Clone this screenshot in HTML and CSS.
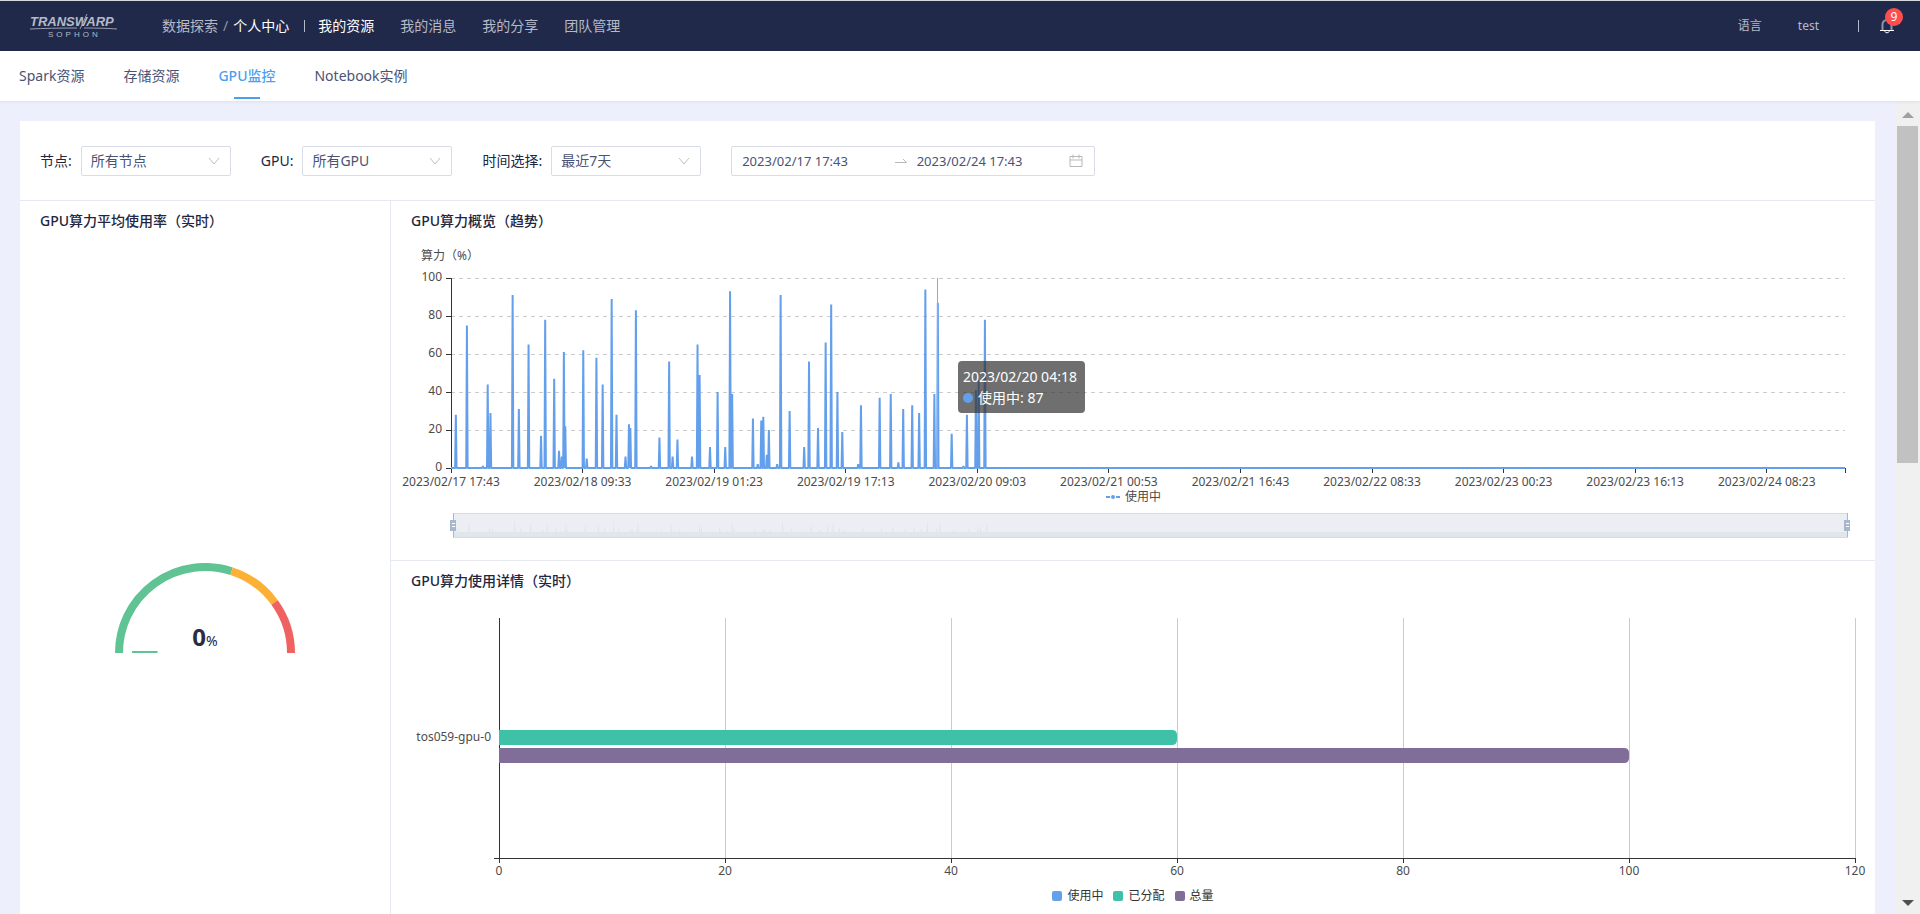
FILE: index.html
```
<!DOCTYPE html>
<html lang="zh-CN">
<head>
<meta charset="UTF-8">
<meta name="viewport" content="width=device-width, initial-scale=1.0">
<title>GPU监控</title>
<link rel="stylesheet" href="styles.css">
</head>
<body>
  <header class="topbar">
    <a class="logo" href="#">
      <svg width="88" height="28" viewBox="0 0 88 28" role="img" aria-label="Transwarp Sophon">
        <text class="logo-name" x="0" y="14">TRANSWARP</text>
        <path d="M0 17q20-1 47-1M54 16q20 0 33 1M57 2l-7 15" />
        <text class="logo-sub" x="18" y="25">SOPHON</text>
      </svg>
    </a>
    <nav class="crumbs">
      <a href="#">数据探索</a>
      <span class="slash">/</span>
      <a class="on" href="#">个人中心</a>
    </nav>
    <span class="bar"></span>
    <nav class="menu">
      <a class="on" href="#">我的资源</a>
      <a href="#">我的消息</a>
      <a href="#">我的分享</a>
      <a href="#">团队管理</a>
    </nav>
    <div class="user">
      <button type="button">语言</button>
      <button type="button">test</button>
      <span class="bar"></span>
      <button type="button" class="bell" aria-label="消息">
        <svg width="14" height="16" viewBox="0 0 14 16">
          <path d="M2.5 12V6.5a4.5 4.5 0 0 1 9 0V12" />
          <path class="base" d="M0 12.5h14" />
          <path class="base" d="M4.5 13.5q2.5 3 5 0" />
        </svg>
        <span class="badge">9</span>
      </button>
    </div>
  </header>

  <nav class="tabs">
    <a href="#">Spark资源</a>
    <a href="#">存储资源</a>
    <a class="active" href="#">GPU监控</a>
    <a href="#">Notebook实例</a>
  </nav>

  <div class="page">
    <main class="content">
      <div class="panel">
        <form class="filters">
          <div class="field">
            <label for="node">节点:</label>
            <div class="select">
              <select id="node"><option>所有节点</option></select>
              <svg width="12" height="8" viewBox="0 0 12 8"><path d="M1 1l5 6 5-6" /></svg>
            </div>
          </div>
          <div class="field">
            <label for="gpu">GPU:</label>
            <div class="select">
              <select id="gpu"><option>所有GPU</option></select>
              <svg width="12" height="8" viewBox="0 0 12 8"><path d="M1 1l5 6 5-6" /></svg>
            </div>
          </div>
          <div class="field">
            <label for="time">时间选择:</label>
            <div class="select">
              <select id="time"><option>最近7天</option></select>
              <svg width="12" height="8" viewBox="0 0 12 8"><path d="M1 1l5 6 5-6" /></svg>
            </div>
          </div>
          <div class="range">
            <input type="text" value="2023/02/17 17:43" aria-label="开始时间">
            <svg width="12" height="12" viewBox="0 0 12 12"><path d="M0 7.5h11.5L8 4" /></svg>
            <input type="text" value="2023/02/24 17:43" aria-label="结束时间">
            <svg width="14" height="14" viewBox="0 0 14 14"><path d="M1 2.5h12v10H1zM1 6h12M4 0.5v4M10 0.5v4" /></svg>
          </div>
        </form>

        <div class="boards">
          <section class="board gauge-board">
            <h2>GPU算力平均使用率（实时）</h2>
            <div class="gauge">
              <svg width="180" height="90" viewBox="0 0 180 90">
                <path stroke="#5fc394" d="M4 90A86 86 0 0 1 116.6 8.2" />
                <path stroke="#fcb036" d="M116.6 8.2A86 86 0 0 1 159.6 39.5" />
                <path stroke="#f06262" d="M159.6 39.5A86 86 0 0 1 176 90" />
                <path class="needle" d="M17 88h26l-1 2H17z" />
              </svg>
              <div class="gauge-value"><b>0</b>%</div>
            </div>
          </section>

          <div class="side">
            <section class="board trend-board">
              <h2>GPU算力概览（趋势）</h2>
              <svg class="chart" id="trend" height="314"></svg>
              <div class="tooltip" id="tooltip">
                <div>2023/02/20 04:18</div>
                <div><i></i>使用中: 87</div>
              </div>
            </section>
            <section class="board detail-board">
              <h2>GPU算力使用详情（实时）</h2>
              <svg class="chart" id="detail" height="295"></svg>
              <ul class="legend">
                <li><i class="used"></i>使用中</li>
                <li><i class="assigned"></i>已分配</li>
                <li><i class="total"></i>总量</li>
              </ul>
            </section>
          </div>
        </div>
      </div>
    </main>
    <div class="scrollbar">
      <button type="button" class="up" aria-label="向上"></button>
      <div class="track"><div class="thumb"></div></div>
      <button type="button" class="down" aria-label="向下"></button>
    </div>
  </div>

  <script src="chart.js"></script>
</body>
</html>
```
FILE: styles.css
```
* {
  box-sizing: border-box;
}

body {
  display: flex;
  flex-direction: column;
  height: 100vh;
  margin: 0;
  overflow: hidden;
  background: #edf0fc;
  color: #22263f;
  font-family: "Noto Sans", "Noto Sans CJK SC", sans-serif;
  font-size: 14px;
  line-height: 20px;
}

a {
  color: inherit;
  text-decoration: none;
}

button {
  padding: 0;
  border: 0;
  background: none;
  color: inherit;
  font: inherit;
  cursor: pointer;
}

svg {
  display: block;
  fill: none;
}

/* top bar */
.topbar {
  display: flex;
  flex: none;
  align-items: center;
  height: 51px;
  padding: 0 26px 0 30px;
  border-top: 1px solid #d5dbdc;
  background: #21294b;
  color: #b5bac8;
}

.logo {
  margin-right: 44px;
}

.logo path {
  stroke: #9a9fb3;
}

.logo-name {
  fill: #b5bac8;
  font-family: "Liberation Sans", Arial, sans-serif;
  font-size: 13px;
  font-style: italic;
  font-weight: bold;
}

.logo-sub {
  fill: #b5bac8;
  font-family: "Liberation Sans", Arial, sans-serif;
  font-size: 8px;
  letter-spacing: 3px;
}

.crumbs {
  display: flex;
  gap: 5px;
}

.slash {
  color: #8f94a8;
}

.on {
  color: #fff;
}

.bar {
  width: 1px;
  height: 12px;
  margin: 0 13px 0 15px;
  background: #b5bac8;
}

.menu {
  display: flex;
  gap: 26px;
}

.user {
  display: flex;
  align-items: center;
  gap: 36px;
  margin-left: auto;
  font-size: 12px;
}

.user .bar {
  margin: 0 -15px 0 3px;
}

.bell {
  position: relative;
}

.bell path {
  stroke: #8f94a8;
  stroke-width: 2;
}

.bell .base {
  stroke: #fff;
  stroke-width: 1;
}

.badge {
  position: absolute;
  top: -10px;
  left: 5px;
  width: 18px;
  height: 18px;
  border-radius: 9px;
  background: #ff4d4f;
  color: #fff;
  line-height: 18px;
  text-align: center;
}

/* tabs */
.tabs {
  position: relative;
  display: flex;
  flex: none;
  gap: 39px;
  height: 50px;
  padding: 0 19px;
  background: #fff;
  box-shadow: 0 1px 3px rgba(0, 21, 41, 0.08);
  color: #4a5375;
}

.tabs a {
  height: 50px;
  line-height: 50px;
}

.tabs .active {
  position: relative;
  color: #4a9ff0;
  font-weight: 500;
}

.tabs .active::after {
  content: "";
  position: absolute;
  bottom: 2px;
  left: 50%;
  width: 26px;
  height: 2px;
  margin-left: -13px;
  background: #4a9ff0;
}

/* page */
.page {
  display: flex;
  flex: 1;
  min-height: 0;
}

.content {
  flex: 1;
  min-width: 0;
  padding: 20px 20px 0;
  overflow: hidden;
}

.panel {
  display: flex;
  flex-direction: column;
  background: #fff;
}

.filters {
  display: flex;
  align-items: center;
  gap: 30px;
  padding: 25px 20px 24px;
  border-bottom: 1px solid #e6e8f2;
}

.field {
  display: flex;
  align-items: center;
  gap: 9px;
}

.select {
  position: relative;
}

select {
  display: block;
  width: 150px;
  height: 30px;
  padding: 0 9px;
  border: 1px solid #d9dce6;
  border-radius: 2px;
  appearance: none;
  background: #fff;
  color: #4a5375;
  font: inherit;
}

.select svg {
  position: absolute;
  top: 11px;
  right: 11px;
  pointer-events: none;
  stroke: #bfbfbf;
}

.range {
  display: flex;
  align-items: center;
  gap: 10px;
  width: 364px;
  height: 30px;
  padding: 0 11px 0 10px;
  border: 1px solid #d9dce6;
  border-radius: 2px;
}

.range input {
  flex: 1;
  min-width: 0;
  padding: 0;
  border: 0;
  outline: none;
  color: #4a5375;
  font: inherit;
  font-size: 13px;
}

.range svg {
  stroke: #b8b8b8;
}

/* boards */
.boards {
  display: flex;
}

.board {
  padding: 10px 20px;
}

h2 {
  margin: 0;
  font-size: 14px;
  font-weight: 500;
  line-height: 20px;
}

.gauge-board {
  width: 370px;
  flex: none;
}

.gauge {
  position: relative;
  width: 180px;
  margin: 332px auto 0;
}

.gauge path {
  stroke-width: 8;
}

.gauge .needle {
  fill: #5fc394;
  stroke: none;
}

.gauge-value {
  position: absolute;
  right: 0;
  bottom: 0;
  left: 0;
  line-height: 24px;
  text-align: center;
}

.gauge-value b {
  color: #2b2e3c;
  font-size: 24px;
}

.side {
  flex: 1;
  min-width: 0;
  border-left: 1px solid #e6e8f2;
}

.trend-board {
  position: relative;
  height: 360px;
  border-bottom: 1px solid #e6e8f2;
}

.detail-board {
  padding-bottom: 30px;
}

.chart {
  width: calc(100% + 40px);
  margin: 0 -20px;
}

.chart text {
  fill: #4c4c4c;
  font-size: 12px;
}

.chart rect,
.chart line {
  shape-rendering: crispEdges;
}

.tooltip {
  position: absolute;
  top: 160px;
  padding: 5px 8px 5px 5px;
  border-radius: 4px;
  background: rgba(50, 50, 50, 0.7);
  color: #fff;
  line-height: 21px;
  white-space: nowrap;
}

.tooltip i {
  display: inline-block;
  width: 10px;
  height: 10px;
  margin-right: 5px;
  border-radius: 50%;
  background: #649fec;
}

.legend {
  display: flex;
  justify-content: center;
  gap: 10px;
  margin: 0;
  padding: 0;
  list-style: none;
  color: #333;
  font-size: 12px;
  line-height: 20px;
}

.legend li {
  display: flex;
  align-items: center;
  gap: 5px;
}

.legend i {
  width: 10px;
  height: 10px;
  border-radius: 2px;
}

.used {
  background: #649fec;
}

.assigned {
  background: #3fc1a8;
}

.total {
  background: #816e98;
}

/* scrollbar */
.scrollbar {
  display: flex;
  flex-direction: column;
  width: 25px;
  padding: 3px 0 0;
  background: #f0f0f0;
}

.up,
.down {
  display: flex;
  align-items: center;
  justify-content: center;
  height: 22px;
}

.up::before,
.down::before {
  content: "";
  border: 6px solid transparent;
}

.up::before {
  border-top: 0;
  border-bottom-color: #a0a0a0;
}

.down::before {
  border-bottom: 0;
  border-top-color: #505050;
}

.track {
  flex: 1;
  padding: 0 2px;
}

.thumb {
  height: 44%;
  background: #c1c1c1;
}
```
FILE: chart.js
```
const NS = 'http://www.w3.org/2000/svg';

// one sample every 5 minutes, 7 days
const SAMPLES = 2013;
const STEP = 190;
const HOVER = 703;

// [sample, usage], every other sample is 0
const peaks = [
  [7, 28], [23, 75], [46, 1], [53, 44], [57, 29], [89, 91], [98, 31], [112, 65],
  [130, 17], [136, 78], [149, 47], [156, 9], [160, 6], [163, 61], [165, 22], [191, 62],
  [196, 5], [210, 58], [219, 44], [232, 89], [239, 28], [252, 6], [257, 23], [259, 21],
  [267, 83], [289, 1], [301, 16], [315, 56], [320, 6], [327, 15], [348, 6], [356, 65],
  [359, 49], [374, 11], [385, 40], [396, 11], [403, 93], [406, 39], [436, 26], [443, 2],
  [448, 25], [451, 27], [456, 7], [459, 20], [471, 2], [476, 91], [489, 30], [510, 11],
  [517, 56], [530, 21], [541, 66], [549, 86], [558, 40], [565, 19], [588, 2], [592, 33],
  [619, 37], [635, 39], [646, 3], [653, 31], [666, 33], [676, 29], [685, 94], [698, 39],
  [703, 87], [723, 18], [740, 1], [745, 28], [758, 41], [762, 46], [771, 78]
];

const times = [
  '2023/02/17 17:43', '2023/02/18 09:33', '2023/02/19 01:23', '2023/02/19 17:13',
  '2023/02/20 09:03', '2023/02/21 00:53', '2023/02/21 16:43', '2023/02/22 08:33',
  '2023/02/23 00:23', '2023/02/23 16:13', '2023/02/24 08:23'
];

function add(svg, name, attrs, text) {
  const el = document.createElementNS(NS, name);
  for (const key in attrs) el.setAttribute(key, attrs[key]);
  if (text !== undefined) el.textContent = text;
  svg.appendChild(el);
}

function line(svg, x1, y1, x2, y2, stroke, more) {
  add(svg, 'line', { x1, y1, x2, y2, stroke, ...more });
}

function peakPath(left, width, base, height) {
  const x = i => left + i / SAMPLES * width;
  let d = `M${left} ${base}`;
  peaks.forEach(([i, v]) => {
    d += `L${x(i - 1)} ${base}L${x(i)} ${base - v / 100 * height}L${x(i + 1)} ${base}`;
  });
  return d + `L${left + width} ${base}`;
}

function drawTrend() {
  const svg = document.getElementById('trend');
  svg.innerHTML = '';
  const w = svg.getBoundingClientRect().width;
  const left = 60, right = w - 30, top = 47, base = 237;
  const width = right - left;

  add(svg, 'text', { x: 30, y: 29 }, '算力（%）');
  for (let v = 0; v <= 100; v += 20) {
    const y = base - v / 100 * (base - top);
    if (v) line(svg, left, y, right, y, '#ccc', { 'stroke-dasharray': '4 4' });
    line(svg, left - 5, y, left, y, '#333');
    add(svg, 'text', { x: left - 9, y: y + 3, 'text-anchor': 'end' }, v);
  }
  line(svg, left, top, left, base, '#333');
  times.forEach((t, i) => {
    const x = left + i * STEP / SAMPLES * width;
    line(svg, x, base, x, base + 5, '#333');
    add(svg, 'text', { x, y: base + 18, 'text-anchor': 'middle' }, t);
  });
  line(svg, right, base, right, base + 5, '#333');
  add(svg, 'path', {
    d: peakPath(left, width, base, base - top),
    stroke: '#649fec', 'stroke-width': 2, 'stroke-linejoin': 'bevel'
  });
  const hover = left + HOVER / SAMPLES * width;
  line(svg, hover, top, hover, base, '#a5a5a5');
  document.getElementById('tooltip').style.left = Math.round(hover + 20) + 'px';

  // legend
  const mid = w / 2;
  add(svg, 'path', { d: `M${mid - 27} 266h4m6 0h4`, stroke: '#649fec', 'stroke-width': 2 });
  add(svg, 'circle', { cx: mid - 20, cy: 266, r: 2, fill: '#649fec' });
  add(svg, 'text', { x: mid - 8, y: 270 }, '使用中');

  // zoom slider
  add(svg, 'rect', { x: left + 2, y: 282, width, height: 24, fill: '#ebeff4', stroke: '#d8dbe0' });
  add(svg, 'rect', { x: left + 2, y: 301, width, height: 5, fill: '#e1e5ec' });
  add(svg, 'path', { d: peakPath(left + 2, width, 301, 15) + 'z', fill: '#dfe3ea' });
  [left + 2, right + 2].forEach(x => {
    line(svg, x, 282, x, 306, '#a7b7cc');
    add(svg, 'rect', { x: x - 3, y: 289, width: 6, height: 11, fill: '#a7b7cc' });
    add(svg, 'path', { d: `M${x - 1} 292.5h3m-3 3h3`, stroke: '#fff' });
  });
}

function drawDetail() {
  const svg = document.getElementById('detail');
  svg.innerHTML = '';
  const w = svg.getBoundingClientRect().width;
  const left = 108, right = w - 20, top = 27, base = 267;
  const unit = (right - left) / 120;

  for (let v = 0; v <= 120; v += 20) {
    const x = left + v * unit;
    if (v) line(svg, x, top, x, base, '#ccc');
    line(svg, x, base, x, base + 5, '#333');
    add(svg, 'text', { x, y: base + 17, 'text-anchor': 'middle' }, v);
  }
  line(svg, left, top, left, base, '#333');
  line(svg, left - 5, base, right, base, '#333');
  add(svg, 'text', { x: left - 8, y: 150, 'text-anchor': 'end' }, 'tos059-gpu-0');
  bar(svg, left, 139, 60 * unit, '#3fc1a8');
  bar(svg, left, 157, 100 * unit, '#816e98');
}

// flat on the left, rounded on the right
function bar(svg, x, y, width, fill) {
  add(svg, 'path', { d: `M${x} ${y}h${width - 5}q5 0 5 5v5q0 5 -5 5H${x}z`, fill });
}

function draw() {
  drawTrend();
  drawDetail();
}

window.addEventListener('resize', draw);
draw();
```
